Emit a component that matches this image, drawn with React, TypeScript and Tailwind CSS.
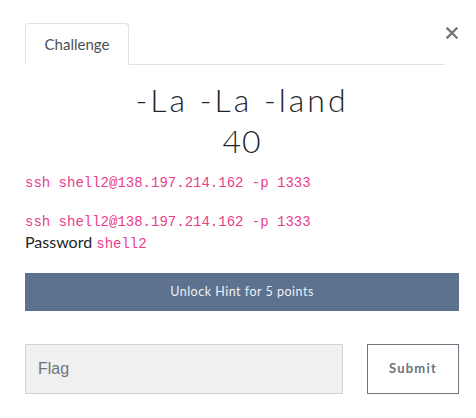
export default function App() {
  const code = "font-['Liberation_Mono',monospace] text-[14px] text-[#e83e8c]";
  return (
    <div className="w-[476px] h-[418px] bg-white font-['Lato',sans-serif] text-[#212529]">
      <div className="pl-[25px] pt-[23px]">
        {/* Tabs + close */}
        <div className="w-[434px] flex items-start">
          <div className="flex-1 flex border-b border-[#dee2e6]">
            <div className="-mb-px h-[42px] w-[104px] flex items-center justify-center rounded-t-[4px] border border-b-white border-[#dee2e6] bg-white text-[15px] text-[#495057]">
              Challenge
            </div>
          </div>
          <button className="ml-[1px] mr-[1px] mt-[4px] w-[12px] h-[12px] text-[#777777]">
            <svg viewBox="0 0 12 12" className="w-[12px] h-[12px]">
              <path d="M1.5 1.5 L10.5 10.5 M10.5 1.5 L1.5 10.5" stroke="currentColor" strokeWidth="2.4" strokeLinecap="square" fill="none" />
            </svg>
          </button>
        </div>

        <div className="w-[434px]">
          <h2 className="mt-[15px] text-center text-[32px] leading-[40px] font-light tracking-[3px] text-[#212529]">
            -La -La -land
          </h2>
          <h3 className="mt-[3px] text-center text-[32px] leading-[36px] font-light tracking-[1px] text-[#212529]">40</h3>

          <p className={`${code} mt-[13px] leading-[22px]`}>ssh shell2@138.197.214.162 -p 1333</p>
          <p className={`${code} mt-[17px] leading-[22px]`}>ssh shell2@138.197.214.162 -p 1333</p>
          <p className="-mt-[1px] text-[16px] leading-[20px]">
            Password <span className={`${code} leading-none`}>shell2</span>
          </p>

          <button className="mt-[21px] w-full h-[38px] bg-[#5c728f] text-[#eef1f5] text-[12.5px] tracking-[0.5px]">
            Unlock Hint for 5 points
          </button>

          <div className="mt-[33px] flex items-center">
            <div className="w-[318px] h-[50px] bg-[#f0f0f0] border border-[#ced4da] flex items-center px-[12px] text-[16px] text-[#6c757d] font-['Liberation_Sans',sans-serif]">
              Flag
            </div>
            <button className="ml-[24px] w-[92px] h-[50px] border border-[#6c757d] bg-white text-[13px] font-bold tracking-[1.2px] text-[#6c757d]">
              Submit
            </button>
          </div>
        </div>
      </div>
    </div>
  );
}
